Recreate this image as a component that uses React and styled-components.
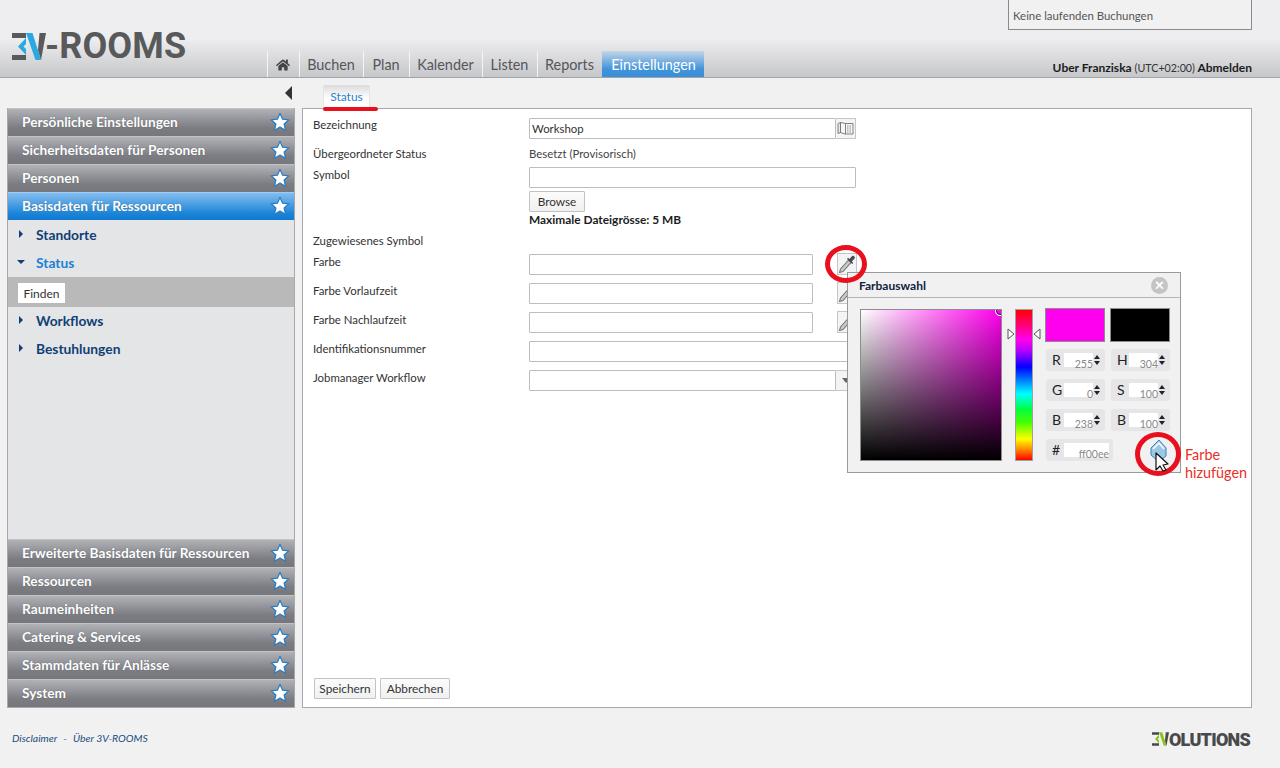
import React from 'react'
import styled, { createGlobalStyle } from 'styled-components'
import { FaHome } from 'react-icons/fa'

const FONT = `Lato, 'Noto Sans', sans-serif`

const GlobalStyle = createGlobalStyle`
  html, body {
    margin: 0;
    height: 100%;
    background: #f1f1f1;
    font-family: ${FONT};
    font-size: 11.4px;
    color: #333;
  }
  * { box-sizing: border-box; }
`

const Page = styled.div`
  position: relative;
  width: 1280px;
  height: 768px;
  overflow: hidden;
  display: flex;
  flex-direction: column;
`
const Header = styled.header`
  height: 78px;
  flex: none;
  display: flex;
  border-bottom: 1px solid #a3a4a6;
  background: linear-gradient(to bottom, #eeeef0 0, #eeeef0 38px, #c6c7ca 77px);
`
const LogoWrap = styled.div`
  width: 267px;
  flex: none;
  padding: 33px 0 0 12px;
  display: flex;
  align-items: flex-start;
`
const LogoText = styled.span`
  font-family: Roboto, sans-serif;
  font-weight: 700;
  font-size: 36px;
  line-height: 27px;
  margin-left: -1px;
  letter-spacing: 0.1px;
  color: #58595b;
`
const TopNav = styled.nav`
  display: flex;
  align-items: flex-end;
  gap: 1px;
  align-self: flex-end;
  height: 26px;
`
const NavTab = styled.div`
  height: 26px;
  width: ${props => props.w}px;
  display: flex;
  align-items: center;
  justify-content: center;
  font-size: 14.4px;
  padding-top: 1px;
  color: ${props => (props.active ? '#fff' : '#55565a')};
  border-left: 1px solid ${props => (props.active ? 'transparent' : '#f4f4f5')};
  background: ${props =>
    props.active ? 'linear-gradient(to bottom, #c3d6e8 0, #3f93da 70%, #3a8fd8 100%)' : 'transparent'};
`
const UserArea = styled.div`
  margin-left: auto;
  width: 244px;
  margin-right: 28px;
  display: flex;
  flex-direction: column;
  justify-content: space-between;
  padding-bottom: 2px;
`
const RunningBox = styled.div`
  height: 30px;
  background: #f1f1f1;
  border: 1px solid #8a8a8c;
  border-top: 0;
  padding: 9px 4px 0;
  font-size: 11.4px;
  line-height: 14px;
  color: #555;
`
const UserLine = styled.div`
  text-align: right;
  font-size: 12px;
  color: #1c1c1c;
  font-weight: 700;
  white-space: nowrap;
`
const TimeZone = styled.span`
  font-size: 10.7px;
  font-weight: 400;
  color: #333;
`
const SubBar = styled.div`
  height: 30px;
  flex: none;
  display: flex;
  align-items: flex-end;
`
const CollapseCell = styled.div`
  width: 323px;
  flex: none;
  height: 100%;
  padding: 8px 0 0 285px;
`
const CollapseArrow = styled.div`
  width: 0;
  height: 0;
  border-top: 7px solid transparent;
  border-bottom: 7px solid transparent;
  border-right: 7px solid #333;
`
const SubTab = styled.div`
  width: 47px;
  height: 23px;
  display: flex;
  align-items: center;
  justify-content: center;
  font-size: 12px;
  color: #2a7fd0;
  background: linear-gradient(to bottom, #dcdcde, #fff 60%);
  border-left: 1px solid #e4e4e4;
  border-right: 1px solid #e4e4e4;
`
const Content = styled.div`
  height: 600px;
  flex: none;
  display: flex;
  padding-left: 7px;
  gap: 7px;
`
const Sidebar = styled.aside`
  width: 288px;
  flex: none;
  display: flex;
  flex-direction: column;
  border: 1px solid #a9a9ab;
  border-top: 0;
  background: #e4e5e7;
`
const SectionHead = styled.div`
  height: 28px;
  flex: none;
  display: flex;
  align-items: center;
  justify-content: space-between;
  padding: 0 4px 1px 14px;
  border-top: 1px solid ${props => (props.active ? '#9ccbf4' : '#c2c3c6')};
  background: ${props =>
    props.active
      ? 'linear-gradient(to bottom, #84bdf0 0, #1d85d8 75%, #1079d0 100%)'
      : 'linear-gradient(to bottom, #b1b2b6 0, #7b7d83 70%, #75777d 100%)'};
  color: #fff;
  font-size: 13.7px;
  font-weight: 700;
  text-shadow: 0 0 1px rgba(60, 60, 60, 0.6);
`
const SectionLabel = styled.span`
  padding-bottom: 2px;
`
const SectionBody = styled.div`
  flex: 1;
  display: flex;
  flex-direction: column;
  padding-top: 1px;
`
const TreeItem = styled.div`
  height: 28px;
  display: flex;
  align-items: center;
  padding: 0 0 2px 10px;
  font-size: 13.8px;
  font-weight: 700;
  color: ${props => (props.active ? '#2180d6' : '#0f3f75')};
`
const TreeArrowBox = styled.span`
  width: 18px;
  display: flex;
  align-items: center;
`
const ArrowRight = styled.span`
  width: 0;
  height: 0;
  border-top: 4px solid transparent;
  border-bottom: 4px solid transparent;
  border-left: 4px solid #0f3f75;
  margin-left: 1px;
`
const ArrowDown = styled.span`
  width: 0;
  height: 0;
  border-left: 4px solid transparent;
  border-right: 4px solid transparent;
  border-top: 4px solid #0f3f75;
  margin-left: -1px;
`
const ActionBar = styled.div`
  height: 30px;
  background: #b9b9b9;
  padding: 6px 0 0 10px;
`
const FindButton = styled.div`
  width: 47px;
  height: 20px;
  background: #fff;
  display: flex;
  align-items: center;
  justify-content: center;
  padding-top: 1px;
  font-size: 12px;
  color: #333;
`
const MainPanel = styled.main`
  width: 950px;
  flex: none;
  background: #fff;
  border: 1px solid #a9a9ab;
  display: flex;
  flex-direction: column;
  padding: 9px 10px 8px;
`
const FormGrid = styled.div`
  display: grid;
  grid-template-columns: 216px 1fr;
  align-items: start;
`
const Label = styled.div`
  height: ${props => props.h}px;
  font-size: 11.4px;
  line-height: ${props => (props.tight ? 14 : 16)}px;
  color: #333;
`
const Cell = styled.div`
  height: ${props => props.h}px;
  display: flex;
  flex-direction: ${props => (props.col ? 'column' : 'row')};
  align-items: flex-start;
  gap: ${props => props.gap || 0}px;
`
const TextBox = styled.div`
  width: ${props => props.w}px;
  height: 21px;
  flex: none;
  background: #fff;
  border: 1px solid #bdbdbd;
  border-radius: 1px;
  padding: 0 2px;
  font-size: 11.4px;
  line-height: 20px;
  color: #333;
`
const IconButton = styled.div`
  width: 20px;
  height: ${props => (props.tall ? 22 : 21)}px;
  margin-top: ${props => (props.tall ? -1 : 0)}px;
  flex: none;
  display: flex;
  align-items: center;
  justify-content: center;
  background: #f4f4f4;
  border: 1px solid #c6c6c6;
  border-left: ${props => (props.joined ? '0' : '1px solid #c6c6c6')};
`
const PlainValue = styled.div`
  font-size: 11.4px;
  line-height: 14px;
  color: #444;
`
const PlainButton = styled.div`
  width: ${props => props.w}px;
  height: 21px;
  flex: none;
  display: flex;
  align-items: center;
  justify-content: center;
  background: linear-gradient(to bottom, #fbfbfb, #f0f0f0);
  border: 1px solid #c2c2c2;
  border-radius: 1px;
  font-size: 11.8px;
  color: #333;
  margin-top: ${props => props.top || 0}px;
`
const Hint = styled.div`
  font-size: 11.9px;
  font-weight: 700;
  line-height: 15px;
  color: #1c1c1c;
`
const SelectArrow = styled.span`
  width: 0;
  height: 0;
  border-left: 4px solid transparent;
  border-right: 4px solid transparent;
  border-top: 5px solid #666;
`
const FormActions = styled.div`
  margin-top: auto;
  display: flex;
  gap: 4px;
  padding-left: 1px;
`
const Footer = styled.footer`
  flex: 1;
  display: flex;
  justify-content: space-between;
  padding: 0 30px 0 12px;
  align-items: flex-start;
`
const FooterLinks = styled.div`
  margin-top: 23px;
  display: flex;
  gap: 6px;
  font-size: 10.4px;
  font-style: italic;
  line-height: 14px;
  color: #1a4d80;
`
const MiniLogo = styled.div`
  margin-top: 24px;
  display: flex;
  align-items: flex-start;
`
const MiniLogoText = styled.span`
  font-family: Roboto, sans-serif;
  font-weight: 900;
  font-size: 18px;
  line-height: 15px;
  letter-spacing: -0.75px;
  color: #48494b;
`
const Picker = styled.div`
  position: absolute;
  left: 847px;
  top: 272px;
  width: 334px;
  height: 201px;
  background: #f1f1f1;
  border: 1px solid #9a9a9e;
`
const PickerHead = styled.div`
  height: 25px;
  display: flex;
  align-items: center;
  justify-content: space-between;
  padding: 0 12px 0 11px;
  border-bottom: 1px solid #b5b5b7;
  font-size: 12px;
  font-weight: 700;
  color: #10233f;
`
const CloseDot = styled.span`
  width: 17px;
  height: 17px;
  border-radius: 50%;
  background: #c4c4c4;
  color: #fff;
  font-size: 17px;
  font-weight: 700;
  line-height: 16px;
  text-align: center;
`
const PickerBody = styled.div`
  display: flex;
  padding: 11px 0 0 12px;
`
const SatBox = styled.div`
  position: relative;
  overflow: hidden;
  width: 142px;
  height: 152px;
  border: 1px solid #8c8c90;
  background: linear-gradient(to top, #000, rgba(0, 0, 0, 0)), linear-gradient(to right, #fff, #ff00ee);
`
const SatCursor = styled.span`
  position: absolute;
  top: -4px;
  right: -4px;
  width: 9px;
  height: 9px;
  border-radius: 50%;
  border: 1px solid #222;
  box-shadow: 0 0 0 1px #fff;
`
const HueBar = styled.div`
  position: relative;
  width: 18px;
  height: 152px;
  margin-left: 13px;
  border: 1px solid #a0a0a4;
  background: linear-gradient(to bottom, #f00 0%, #f0e 20%, #a0f 28%, #00f 38%, #0af 50%, #0ff 56%, #0f4 66%, #4f0 75%, #ff0 86%, #f80 93%, #f00 100%);
`
const HueMark = styled.svg`
  position: absolute;
  top: 18px;
  ${props => (props.left ? 'left: -9px;' : 'right: -9px;')}
`
const PickerSide = styled.div`
  margin-left: 12px;
  margin-top: -1px;
  width: 126px;
  display: flex;
  flex-direction: column;
`
const SwatchRow = styled.div`
  display: flex;
  gap: 5px;
  margin-bottom: 7px;
`
const Swatch = styled.div`
  width: 60px;
  height: 34px;
  border: 1px solid #8c8c90;
  background: ${props => props.color};
`
const FieldGrid = styled.div`
  display: grid;
  grid-template-columns: 59px 59px;
  grid-auto-rows: 22px;
  column-gap: 6px;
  row-gap: 8px;
  padding-left: 1px;
`
const Field = styled.div`
  width: ${props => props.w || 59}px;
  height: 22px;
  display: flex;
  align-items: center;
  background: #e6e6e8;
  border-radius: 3px;
  padding-left: 6px;
`
const FieldLabel = styled.span`
  width: 12px;
  flex: none;
  font-size: 14px;
  color: #222;
  padding-bottom: 1px;
`
const FieldInput = styled.span`
  width: ${props => props.w || 29}px;
  height: 14px;
  flex: none;
  align-self: flex-start;
  margin-top: 4px;
  background: #fff;
  border-radius: 1px;
  font-size: 10.5px;
  color: #888;
  text-align: right;
  line-height: 23px;
  white-space: nowrap;
`
const Spinner = styled.span`
  width: 8px;
  display: flex;
  flex-direction: column;
  align-items: center;
  gap: 2px;
`
const SpinUp = styled.span`
  width: 0;
  height: 0;
  border-left: 3px solid transparent;
  border-right: 3px solid transparent;
  border-bottom: 4px solid #222;
`
const SpinDown = styled.span`
  width: 0;
  height: 0;
  border-left: 3px solid transparent;
  border-right: 3px solid transparent;
  border-top: 4px solid #222;
`
const RedRing = styled.div`
  position: absolute;
  left: ${props => props.x}px;
  top: ${props => props.y}px;
  width: ${props => props.w}px;
  height: ${props => props.h}px;
  border: 5px solid #e8101e;
  border-radius: 50%;
`
const RedUnderline = styled.div`
  position: absolute;
  left: 323px;
  top: 107px;
  width: 55px;
  height: 4px;
  border-radius: 2px;
  background: #e8101e;
`
const AddIcon = styled.svg`
  position: absolute;
  left: 1148px;
  top: 438px;
`
const Note = styled.div`
  position: absolute;
  left: 1185px;
  top: 446px;
  font-size: 14.4px;
  line-height: 18px;
  color: #e8302a;
`

const Star = () => (
  <svg width="20" height="20" viewBox="0 0 18 18">
    <polygon
      points="9,1.2 11.3,6.5 17,7 12.7,10.8 14,16.4 9,13.5 4,16.4 5.3,10.8 1,7 6.7,6.5"
      fill="#fff"
      stroke="#2a7cc2"
      strokeWidth="1.1"
      strokeLinejoin="round"
    />
  </svg>
)

const LogoMark = ({ accent, dark, width, height }) => (
  <svg width={width} height={height} viewBox="0 0 34 27">
    <polygon points="0,0 14,0 14,5 0,5" fill={dark} />
    <polygon points="0,22 14,22 14,27 0,27" fill={dark} />
    <polygon points="6,13.5 14,5 14,11 11.5,13.5 14,16 14,22" fill={accent} />
    <polygon points="14,0 20.5,0 29,27 23.5,27" fill={accent} />
    <polygon points="27.5,0 34,0 29,27 26,17" fill={dark} />
  </svg>
)

const Dropper = () => (
  <svg width="18" height="20" viewBox="0 0 18 20">
    <path d="M10.5 6 L2.5 15 L1.5 18.5 L5 17.5 L13 8.5 Z" fill="#c9c9c9" stroke="#777" strokeWidth="1.1" />
    <path d="M9 5 L14.2 10 L15.2 9 L13.8 7.6 L16.6 4.4 C17.6 3 15.6 1 14.2 2 L11.4 5 L10 3.8 Z" fill="#454a50" />
  </svg>
)

const BookIcon = () => (
  <svg width="17" height="15" viewBox="0 0 17 15">
    <path d="M1 2.5 L3.5 1.5 V11.5 L1 12.5 Z" fill="#e8e8e8" stroke="#666" strokeWidth="0.8" />
    <path d="M3.5 1.5 L8.5 2.5 H16 V13 H8 L3.5 11.5 Z" fill="#f6f6f6" stroke="#666" strokeWidth="0.8" />
    <path d="M8.5 2.5 V13" stroke="#666" strokeWidth="0.8" />
    <path d="M10 5 H14.5 M10 7 H14.5 M10 9 H14.5 M10 11 H14.5" stroke="#777" strokeWidth="0.8" strokeDasharray="1.5 1" />
  </svg>
)

const topTabs = [
  { label: 'Buchen', w: 63 },
  { label: 'Plan', w: 45 },
  { label: 'Kalender', w: 72 },
  { label: 'Listen', w: 54 },
  { label: 'Reports', w: 64 },
  { label: 'Einstellungen', w: 102, active: true }
]

const sectionsTop = ['Persönliche Einstellungen', 'Sicherheitsdaten für Personen', 'Personen']
const sectionsBottom = [
  'Erweiterte Basisdaten für Ressourcen',
  'Ressourcen',
  'Raumeinheiten',
  'Catering & Services',
  'Stammdaten für Anlässe',
  'System'
]

const colorFields = [
  { label: 'R', value: '255' },
  { label: 'H', value: '304' },
  { label: 'G', value: '0' },
  { label: 'S', value: '100' },
  { label: 'B', value: '238' },
  { label: 'B', value: '100' }
]

const Section = ({ label, active }) => (
  <SectionHead active={active}>
    <SectionLabel>{label}</SectionLabel>
    <Star />
  </SectionHead>
)

const Tree = ({ label, open, active }) => (
  <TreeItem active={active}>
    <TreeArrowBox>{open ? <ArrowDown /> : <ArrowRight />}</TreeArrowBox>
    {label}
  </TreeItem>
)

export default function App() {
  return (
    <Page>
      <GlobalStyle />
      <Header>
        <LogoWrap>
          <LogoMark accent="#29a9e1" dark="#58595b" width={34} height={27} />
          <LogoText>-ROOMS</LogoText>
        </LogoWrap>
        <TopNav>
          <NavTab w={31}>
            <FaHome size={14} color="#444" />
          </NavTab>
          {topTabs.map(tab => (
            <NavTab key={tab.label} w={tab.w} active={tab.active}>
              {tab.label}
            </NavTab>
          ))}
        </TopNav>
        <UserArea>
          <RunningBox>Keine laufenden Buchungen</RunningBox>
          <UserLine>
            Uber Franziska <TimeZone>(UTC+02:00)</TimeZone> Abmelden
          </UserLine>
        </UserArea>
      </Header>
      <SubBar>
        <CollapseCell>
          <CollapseArrow />
        </CollapseCell>
        <SubTab>Status</SubTab>
      </SubBar>
      <Content>
        <Sidebar>
          {sectionsTop.map(label => (
            <Section key={label} label={label} />
          ))}
          <Section label="Basisdaten für Ressourcen" active />
          <SectionBody>
            <Tree label="Standorte" />
            <Tree label="Status" open active />
            <ActionBar>
              <FindButton>Finden</FindButton>
            </ActionBar>
            <Tree label="Workflows" />
            <Tree label="Bestuhlungen" />
          </SectionBody>
          {sectionsBottom.map(label => (
            <Section key={label} label={label} />
          ))}
        </Sidebar>
        <MainPanel>
          <FormGrid>
            <Label h={29} tight>Bezeichnung</Label>
            <Cell h={29}>
              <TextBox w={307}>Workshop</TextBox>
              <IconButton joined>
                <BookIcon />
              </IconButton>
            </Cell>
            <Label h={20} tight>Übergeordneter Status</Label>
            <Cell h={20}>
              <PlainValue>Besetzt (Provisorisch)</PlainValue>
            </Cell>
            <Label h={66}>Symbol</Label>
            <Cell h={66} col>
              <TextBox w={327}></TextBox>
              <PlainButton w={56} top={3}>Browse</PlainButton>
              <Hint>Maximale Dateigrösse: 5 MB</Hint>
            </Cell>
            <Label h={21}>Zugewiesenes Symbol</Label>
            <Cell h={21} />
            <Label h={29}>Farbe</Label>
            <Cell h={29} gap={24}>
              <TextBox w={284} />
              <IconButton tall>
                <Dropper />
              </IconButton>
            </Cell>
            <Label h={29}>Farbe Vorlaufzeit</Label>
            <Cell h={29} gap={24}>
              <TextBox w={284} />
              <IconButton tall>
                <Dropper />
              </IconButton>
            </Cell>
            <Label h={29}>Farbe Nachlaufzeit</Label>
            <Cell h={29} gap={24}>
              <TextBox w={284} />
              <IconButton tall>
                <Dropper />
              </IconButton>
            </Cell>
            <Label h={29}>Identifikationsnummer</Label>
            <Cell h={29}>
              <TextBox w={327} />
            </Cell>
            <Label h={29}>Jobmanager Workflow</Label>
            <Cell h={29}>
              <TextBox w={307} />
              <IconButton joined>
                <SelectArrow />
              </IconButton>
            </Cell>
          </FormGrid>
          <FormActions>
            <PlainButton w={62}>Speichern</PlainButton>
            <PlainButton w={70}>Abbrechen</PlainButton>
          </FormActions>
        </MainPanel>
      </Content>
      <Footer>
        <FooterLinks>
          <span>Disclaimer</span>
          <span>-</span>
          <span>Über 3V-ROOMS</span>
        </FooterLinks>
        <MiniLogo>
          <LogoMark accent="#8cc21f" dark="#48494b" width={17} height={14} />
          <MiniLogoText>OLUTIONS</MiniLogoText>
        </MiniLogo>
      </Footer>

      <Picker>
        <PickerHead>
          <span>Farbauswahl</span>
          <CloseDot>×</CloseDot>
        </PickerHead>
        <PickerBody>
          <SatBox>
            <SatCursor />
          </SatBox>
          <HueBar>
            <HueMark left width="8" height="12" viewBox="0 0 8 12">
              <polygon points="1,1 7,6 1,11" fill="#fff" stroke="#555" />
            </HueMark>
            <HueMark width="8" height="12" viewBox="0 0 8 12">
              <polygon points="7,1 1,6 7,11" fill="#fff" stroke="#555" />
            </HueMark>
          </HueBar>
          <PickerSide>
            <SwatchRow>
              <Swatch color="#ff00ee" />
              <Swatch color="#000" />
            </SwatchRow>
            <FieldGrid>
              {colorFields.map((field, i) => (
                <Field key={i}>
                  <FieldLabel>{field.label}</FieldLabel>
                  <FieldInput>{field.value}</FieldInput>
                  <Spinner>
                    <SpinUp />
                    <SpinDown />
                  </Spinner>
                </Field>
              ))}
              <Field w={67}>
                <FieldLabel>#</FieldLabel>
                <FieldInput w={45}>ff00ee</FieldInput>
              </Field>
            </FieldGrid>
          </PickerSide>
        </PickerBody>
      </Picker>

      <RedUnderline />
      <RedRing x={825} y={245} w={42} h={38} />
      <RedRing x={1135} y={432} w={46} h={44} />
      <AddIcon width="22" height="34" viewBox="0 0 22 34">
        <path d="M11 2 L18 10 L18 18 L11 24 L3 17 L3 10 Z" fill="#9cc8e8" stroke="#3f82b8" strokeWidth="1" />
        <path d="M5 11 L11 5 L16 11" fill="none" stroke="#fff" strokeWidth="1.5" />
        <path d="M8 15 L8 32 L12 28 L15 33 L18 32 L15 27 L20 26 Z" fill="#fff" stroke="#111" strokeWidth="1.2" strokeLinejoin="round" />
      </AddIcon>
      <Note>
        Farbe
        <br />
        hizufügen
      </Note>
    </Page>
  )
}
